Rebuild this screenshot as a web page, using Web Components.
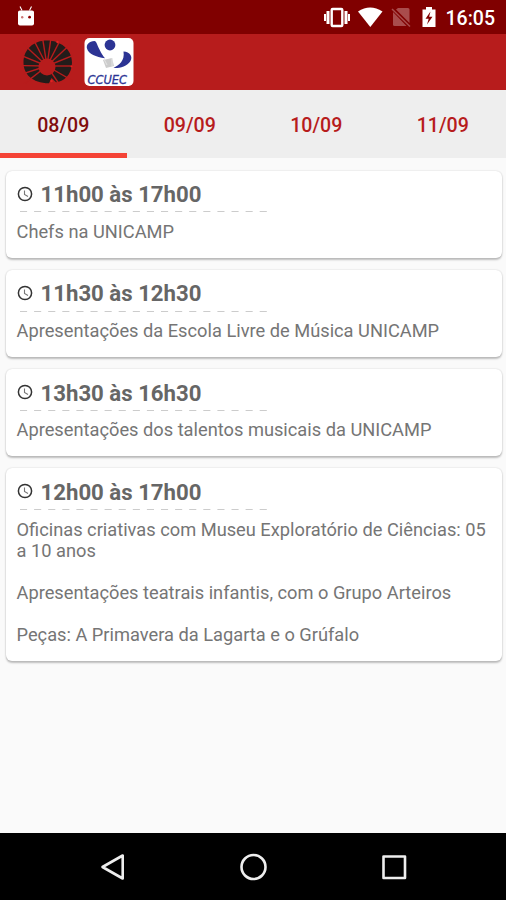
<!DOCTYPE html>
<html lang="pt-BR">
<head>
<meta charset="utf-8">
<title>Agenda</title>
<style>
    body {
        margin: 0;
        font-family: Roboto, sans-serif;
    }
</style>
</head>
<body>
<agenda-app></agenda-app>

<script>
class StatusBar extends HTMLElement {

    constructor() {
        super()
        this.shadowDOM = this.attachShadow({mode : "open"})
    }

    connectedCallback() {
        this.render()
    }

    render() {
        this.shadowDOM.innerHTML = `
            <style>
            :host {
                display: flex;
                align-items: center;
                justify-content: space-between;
                height: 34px;
                padding: 0 11px 0 17px;
                box-sizing: border-box;
                background: #800000;
                color: #fff;
            }
            svg {
                display: block;
            }
            .icons {
                display: flex;
                align-items: center;
            }
            .clock {
                font-size: 19.5px;
                font-weight: 500;
                line-height: 34px;
                margin: 3px 0 0 9px;
            }
            </style>

            <svg width="18" height="22" viewBox="0 0 18 22">
                <path d="M3 0.5l2 4M14.5 0.5l-2 4" stroke="#fff" stroke-width="1.1"/>
                <path d="M1 6q0-1.5 2-1.5h12q2 0 2 1.5v11.5q0 2-2 2H3q-2 0-2-2z" fill="#fff"/>
                <circle cx="5.2" cy="11.2" r="1.2" fill="#c77"/>
                <circle cx="12.6" cy="11.2" r="1.4" fill="#900000"/>
            </svg>
            <div class="icons">
                <svg width="113" height="34" viewBox="0 0 113 34" fill="#fff">
                    <path d="M0 14h2v7H0zM2.5 11h3v13h-3zM26 14h-2v7h2zM23.5 11h-3v13h3z"/>
                    <rect x="7.7" y="9" width="10.6" height="17" rx="1" fill="none" stroke="#fff" stroke-width="2.4"/>
                    <path d="M34 11.5Q46 3.5 58.5 11.5L46.3 27z"/>
                    <g fill="#a94c4c">
                        <path d="M74 8h10q1.5 0 1.5 1.5V23L72 9.5z"/>
                        <path d="M69 12l13.5 14H70.5q-1.5 0-1.5-1.5z"/>
                        <path d="M68 9l18 17.5" stroke="#a94c4c" stroke-width="1.5"/>
                    </g>
                    <path d="M102 7h6v2.5h3.5V27H98.5V9.5h3.5z"/>
                    <path d="M106.5 11.5l-5 7.3h3.2L103 24.5l5.5-7.8h-3.4z" fill="#800000"/>
                </svg>
                <span class="clock">16:05</span>
            </div>
        `
    }

}
customElements.define("status-bar", StatusBar)

class AppHeader extends HTMLElement {

    constructor() {
        super()
        this.shadowDOM = this.attachShadow({mode : "open"})
    }

    connectedCallback() {
        this.render()
    }

    render() {
        // rays of the wheel, in degrees clockwise from the top
        const rays = [-9, 8, 27, 47, 68, 90, 120, 146, 232, 252, 271, 292, 313, 333]
            .map(deg => `<path d="M24 26V-6" transform="rotate(${deg} 24 26)"/>`)
            .join("")

        this.shadowDOM.innerHTML = `
            <style>
            :host {
                display: flex;
                align-items: center;
                gap: 11px;
                height: 56px;
                padding-left: 23px;
                box-sizing: border-box;
                background: #b71c1c;
            }
            svg {
                display: block;
            }
            </style>

            <svg width="50" height="44" viewBox="0 0 50 44">
                <path d="M24 0.5C37 0.5 49 9 49 22.5C49 35 40 42 33 42.3L28.5 38L26 43.3C9 43 0.5 34 0.5 22.5C0.5 9 11 0.5 24 0.5z" fill="#231c1a"/>
                <g stroke="#b71c1c" stroke-width="1.4">${rays}</g>
                <circle cx="24" cy="27" r="8.5" fill="#b71c1c"/>
                <g fill="#e32222">
                    <circle cx="34.5" cy="2" r="1.2"/>
                    <circle cx="48.5" cy="26.5" r="1"/>
                    <circle cx="28.5" cy="41" r="1.2"/>
                </g>
            </svg>
            <svg width="50" height="50" viewBox="0 0 50 50">
                <rect x="0.5" y="1" width="49" height="48" rx="5" fill="#fff"/>
                <g fill="#2c3494">
                    <circle cx="26" cy="8" r="5.4"/>
                    <path d="M10.5 4C5 4 2 8 3 11.5C4.5 17 12 20 21 21.2C18.5 18.5 17.5 16.5 15.5 12.5C13 7.5 12.5 4.5 10.5 4z"/>
                    <path d="M39.5 14.5C46 15 49 19.5 46.5 24C43 29.5 35 31.5 29.5 31C35 28 41 24 39.5 14.5z"/>
                </g>
                <path d="M19 23l9-2 2 8-8 2z" fill="#ccc"/>
                <path d="M20 22l3 6M28 21v8" stroke="#e5e5e5"/>
                <text x="3.5" y="46.5" textLength="39.5" lengthAdjust="spacingAndGlyphs" font-family="DejaVu Sans, sans-serif" font-size="12" font-style="italic" fill="#2c3494" stroke="#2c3494" stroke-width=".3">CCUEC</text>
            </svg>
        `
    }

}
customElements.define("app-header", AppHeader)

class DayTab extends HTMLElement {

    constructor() {
        super()
        this.shadowDOM = this.attachShadow({mode : "open"})
    }

    connectedCallback() {
        this.render()
    }

    render() {
        this.shadowDOM.innerHTML = `
            <style>
            :host {
                flex: 1;
                height: 67.5px;
                padding-top: 3px;
                box-sizing: border-box;
                line-height: 66px;
                text-align: center;
                font-size: 19.6px;
                font-weight: 500;
                color: #b71c1c;
            }
            :host([active]) {
                border-bottom: 5px solid #f44336;
                color: #800d0d;
            }
            </style>

            <slot></slot>
        `
    }

}
customElements.define("day-tab", DayTab)

class EventCard extends HTMLElement {

    constructor() {
        super()
        this.shadowDOM = this.attachShadow({mode : "open"})
    }

    connectedCallback() {
        this.render()
    }

    render() {
        this.shadowDOM.innerHTML = `
            <style>
            :host {
                display: block;
                padding: 10.4px 11px 15.8px;
                border-radius: 6px;
                background: #fff;
                box-shadow: 0 1.5px 2px rgba(0, 0, 0, .24), 0 0 2px rgba(0, 0, 0, .12);
                color: #757575;
            }
            .time {
                display: flex;
                align-items: center;
                gap: 8px;
                height: 26.4px;
                color: #666;
                font-size: 22.2px;
                font-weight: 700;
            }
            svg {
                display: block;
            }
            .time svg {
                margin-bottom: 1px;
            }
            .line {
                margin: 4.2px 0 8.4px 3.5px;
            }
            .text {
                font-size: 18.25px;
                line-height: 21.1px;
                white-space: pre-line;
            }
            </style>

            <div class="time">
                <svg width="16" height="16" viewBox="0 0 16 16" fill="none">
                    <circle cx="8" cy="8" r="6.6" stroke="#333" stroke-width="1.5"/>
                    <path d="M7.5 4.5v4l3.5 2" stroke="#777" stroke-width="1.1"/>
                </svg>
                <slot name="time"></slot>
            </div>
            <svg class="line" width="248" height="1" viewBox="0 0 248 1">
                <path d="M0 .5h248" stroke="#ccc" stroke-dasharray="7.1 7"/>
            </svg>
            <div class="text"><slot></slot></div>
        `
    }

}
customElements.define("event-card", EventCard)

class NavBar extends HTMLElement {

    constructor() {
        super()
        this.shadowDOM = this.attachShadow({mode : "open"})
    }

    connectedCallback() {
        this.render()
    }

    render() {
        this.shadowDOM.innerHTML = `
            <style>
            :host {
                display: flex;
                align-items: center;
                justify-content: center;
                gap: 112px;
                height: 67px;
                padding-left: 1px;
                box-sizing: border-box;
                background: #000;
            }
            </style>

            <svg width="28" height="28" viewBox="0 0 28 28" fill="none" stroke="#eee" stroke-width="2.6" stroke-linejoin="round"><path d="M22.7 2.5v23L2.5 14z"/></svg>
            <svg width="28" height="28" viewBox="0 0 28 28" fill="none" stroke="#eee" stroke-width="2.6"><circle cx="13.5" cy="14" r="12"/></svg>
            <svg width="28" height="28" viewBox="0 0 28 28" fill="none" stroke="#eee" stroke-width="2.6" stroke-linejoin="round"><path d="M3.5 3.5h21.5v21.5h-21.5z"/></svg>
        `
    }

}
customElements.define("nav-bar", NavBar)

class AgendaApp extends HTMLElement {

    constructor() {
        super()
        this.shadowDOM = this.attachShadow({mode : "open"})
    }

    connectedCallback() {
        this.render()
    }

    render() {
        this.shadowDOM.innerHTML = `
            <style>
            :host {
                display: flex;
                flex-direction: column;
                height: 900px;
                background: #fafafa;
            }
            .tabs {
                display: flex;
                background: #eee;
            }
            .events {
                flex: 1;
                display: flex;
                flex-direction: column;
                gap: 12px;
                padding: 13px 4px 0 5.5px;
            }
            </style>

            <status-bar></status-bar>
            <app-header></app-header>
            <div class="tabs">
                <day-tab active>08/09</day-tab>
                <day-tab>09/09</day-tab>
                <day-tab>10/09</day-tab>
                <day-tab>11/09</day-tab>
            </div>
            <div class="events">
                <event-card><span slot="time">11h00 às 17h00</span>Chefs na UNICAMP</event-card>
                <event-card><span slot="time">11h30 às 12h30</span>Apresentações da Escola Livre de Música UNICAMP</event-card>
                <event-card><span slot="time">13h30 às 16h30</span>Apresentações dos talentos musicais da UNICAMP</event-card>
                <event-card><span slot="time">12h00 às 17h00</span>Oficinas criativas com Museu Exploratório de Ciências: 05 a 10 anos

Apresentações teatrais infantis, com o Grupo Arteiros

Peças: A Primavera da Lagarta e o Grúfalo</event-card>
            </div>
            <nav-bar></nav-bar>
        `
    }

}
customElements.define("agenda-app", AgendaApp)
</script>
</body>
</html>
